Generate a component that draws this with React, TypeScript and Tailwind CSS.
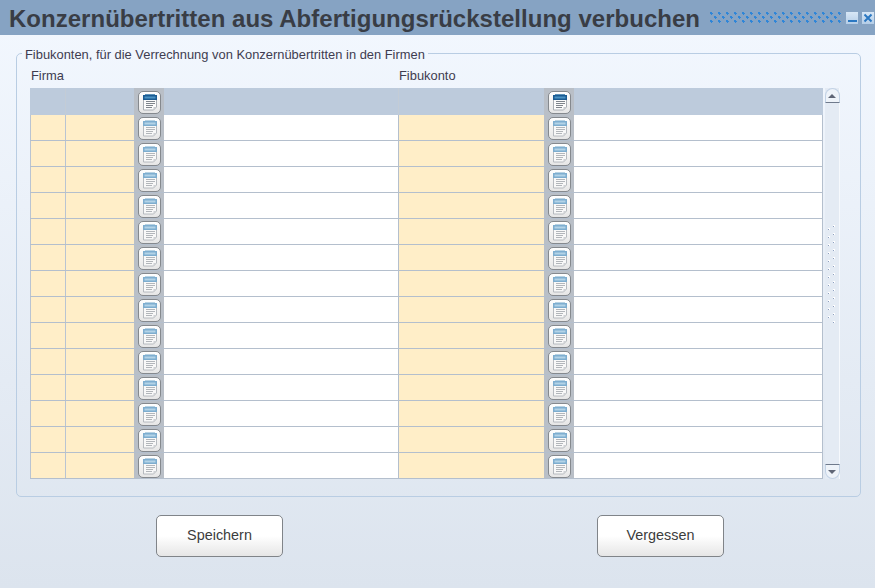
import React from "react";

const ROW_COUNT = 14;
const GRID_COLS = "grid grid-cols-[36px_68px_30px_235px_145px_30px_249px]";

const NoteIcon = ({ active }: { active?: boolean }) => (
  <div className="flex h-[23px] w-[23px] items-center justify-center rounded-[5px] border-[1.5px] border-[#85898e] bg-gradient-to-b from-white to-[#e6e6e6]">
    <svg width="16" height="17" viewBox="0 0 16 17" className={active ? "" : "opacity-80"}>
      <path d="M1.5 2.5h13v10.5l-3 3h-10z" fill="#fbfbfb" stroke="#a9aeb4" strokeWidth="1" />
      <path d="M11.5 16v-3h3z" fill="#c6cacf" />
      <rect x="1" y="1" width="14" height="5" fill={active ? "#1a5a92" : "#5f9bc6"} />
      <rect x="3" y="0" width="10" height="1" fill={active ? "#5d93bb" : "#a9c9df"} />
      <rect x="2.5" y="2.5" width="11" height="2" fill={active ? "#4c93c4" : "#a3cbe3"} />
      <path d="M4 7.5h9M4 9.5h9M4 11.5h7M4 13.5h6" stroke={active ? "#7f858c" : "#a3a8ae"} strokeWidth="1" />
    </svg>
  </div>
);

const IconCell = ({ active }: { active?: boolean }) => (
  <div className={`flex items-start bg-[#b9bfc7] pl-[4px] ${active ? "pt-[3px]" : "pt-[2px]"}`}>
    <NoteIcon active={active} />
  </div>
);

const HeaderRow = () => (
  <div className={`${GRID_COLS} h-[27px] bg-[#bdcbdc]`}>
    <div className="border-r border-[#c3ccd6]" />
    <div />
    <IconCell active />
    <div className="border-r border-[#c3ccd6]" />
    <div />
    <IconCell active />
    <div />
  </div>
);

const DataRow = () => (
  <div className={`${GRID_COLS} h-[26px] border-b border-[#b4bfcd]`}>
    <div className="border-x border-[#b9c4d2] bg-[#ffeec8]" />
    <div className="bg-[#ffeec8]" />
    <IconCell />
    <div className="border-r border-[#b4bfcd] bg-white" />
    <div className="bg-[#ffeec8]" />
    <IconCell />
    <div className="border-r border-[#b4bfcd] bg-white" />
  </div>
);

const Scrollbar = () => (
  <div className="flex h-[391px] w-[15px] flex-col items-center border-r border-[#f6f9fd] bg-[#e4ebf4]">
    <div className="flex h-[15px] w-[15px] items-center justify-center rounded-t-full border border-[#c2d2e5] border-b-[#6f7a8c] bg-[#eef3f9]">
      <div className="h-0 w-0 border-x-[4px] border-b-[4px] border-x-transparent border-b-[#5f6676]" />
    </div>
    <div className="flex flex-1 items-center justify-center pb-[20px]">
      <svg width="8" height="98" viewBox="0 0 8 98">
        <defs>
          <pattern id="grip" width="8" height="8" patternUnits="userSpaceOnUse">
            <rect x="0" y="3" width="2" height="2" fill="#ffffff" />
            <rect x="0" y="4" width="1" height="1" fill="#8d9fc0" />
            <rect x="5" y="0" width="2" height="2" fill="#ffffff" />
            <rect x="5" y="1" width="1" height="1" fill="#8d9fc0" />
          </pattern>
        </defs>
        <rect width="8" height="98" fill="url(#grip)" />
      </svg>
    </div>
    <div className="flex h-[15px] w-[15px] items-center justify-center rounded-b-full border border-[#c2d2e5] border-t-[#6f7a8c] bg-[#eef3f9]">
      <div className="h-0 w-0 border-x-[4px] border-t-[4px] border-x-transparent border-t-[#5f6676]" />
    </div>
  </div>
);

const TitleDots = () => (
  <svg width="133" height="11" viewBox="0 0 133 11">
    <defs>
      <pattern id="dots" width="8" height="8" patternUnits="userSpaceOnUse">
        <path d="M1 0h2v1h1v1h-1v1h-1v-1h-1z" fill="#2f86d8" />
        <path d="M5 4h2v1h1v1h-1v1h-1v-1h-1z" fill="#2f86d8" />
      </pattern>
    </defs>
    <rect width="133" height="11" fill="url(#dots)" />
  </svg>
);

const ActionButton = ({ label }: { label: string }) => (
  <button className="h-[42px] w-[127px] rounded-[5px] border border-[#808489] bg-gradient-to-b from-white from-50% to-[#e6e6e6] text-[14.4px] text-[#3c3c3c]">
    {label}
  </button>
);

export default function App() {
  return (
    <div className="flex h-[588px] w-[875px] flex-col overflow-hidden bg-gradient-to-b from-[#f3f8ff] to-[#dce4ee] font-['Liberation_Sans',Arial,sans-serif]">
      <header className="flex h-[35px] items-center bg-[#86a3c3] pl-[9px] pr-[1px]">
        <h1 className="flex-1 whitespace-nowrap pt-[2px] text-[24px] font-bold leading-[33px] tracking-[0.02px] text-[#393d45]">
          Konzernübertritten aus Abfertigungsrückstellung verbuchen
        </h1>
        <div className="flex items-center gap-[4px]">
          <TitleDots />
          <div className="flex h-[12px] w-[12px] items-end justify-center bg-gradient-to-b from-[#d8e7f6] to-[#b4cde7] pb-[2px]">
            <div className="h-[2px] w-[9px] bg-[#2b78c2]" />
          </div>
          <div className="flex h-[12px] w-[12px] items-center justify-center bg-gradient-to-b from-[#d8e7f6] to-[#b4cde7]">
            <svg width="10" height="10" viewBox="0 0 10 10">
              <path d="M1.5 1.5l7 7M8.5 1.5l-7 7" stroke="#2b78c2" strokeWidth="2" />
            </svg>
          </div>
        </div>
      </header>

      <main className="flex flex-1 flex-col px-[16px] pt-[10px]">
        <fieldset className="h-[452px] w-[845px] rounded-[5px] border border-[#b9cde3] pl-[13px]">
          <legend className="-ml-[8px] px-[3px] pt-[2px] text-[12.9px] leading-[15px] text-[#3e3c50]">
            Fibukonten, für die Verrechnung von Konzernübertritten in den Firmen
          </legend>
          <div className="flex h-[26px] pl-[1px] pt-[6px] text-[12.9px] leading-[15px] text-[#3e3c50]">
            <span className="w-[368px]">Firma</span>
            <span>Fibukonto</span>
          </div>
          <div className="flex gap-[2px]">
            <div className="w-[793px]">
              <HeaderRow />
              {Array.from({ length: ROW_COUNT }, (_, i) => (
                <DataRow key={i} />
              ))}
            </div>
            <Scrollbar />
          </div>
        </fieldset>

        <div className="mt-[18px] flex pl-[140px]">
          <ActionButton label="Speichern" />
          <div className="w-[314px]" />
          <ActionButton label="Vergessen" />
        </div>
      </main>
    </div>
  );
}
